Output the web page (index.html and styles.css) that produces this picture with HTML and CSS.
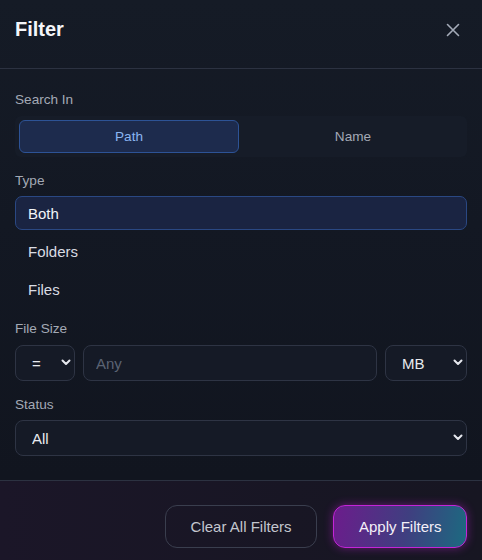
FILE: index.html
```html
<!DOCTYPE html>
<html lang="en">
<head>
<meta charset="utf-8">
<title>Filter</title>
<link rel="stylesheet" href="styles.css">
</head>
<body>
<div class="panel">
  <header class="head">
    <h1 class="title">Filter</h1>
    <button class="close" aria-label="Close">
      <svg width="14" height="14" viewBox="0 0 14 14"><path d="M1.5 1.5 L12.5 12.5 M12.5 1.5 L1.5 12.5" stroke="#a4abb8" stroke-width="1.6" stroke-linecap="round" fill="none"/></svg>
    </button>
  </header>
  <main class="body">
    <section class="field">
      <div class="label">Search In</div>
      <div class="seg">
        <button class="seg-btn active">Path</button>
        <button class="seg-btn">Name</button>
      </div>
    </section>
    <section class="field type">
      <div class="label">Type</div>
      <div class="options">
        <div class="opt selected">Both</div>
        <div class="opt">Folders</div>
        <div class="opt">Files</div>
      </div>
    </section>
    <section class="field">
      <div class="label">File Size</div>
      <div class="size-row">
        <div class="sel-wrap op">
          <select class="sel"><option>=</option></select>
          <svg class="chev" width="10" height="7" viewBox="0 0 10 7"><path d="M1.5 1.5 L5 5 L8.5 1.5" stroke="#e6e8ee" stroke-width="2" fill="none" stroke-linecap="round" stroke-linejoin="round"/></svg>
        </div>
        <input class="inp" type="text" placeholder="Any">
        <div class="sel-wrap unit">
          <select class="sel"><option>MB</option></select>
          <svg class="chev" width="10" height="7" viewBox="0 0 10 7"><path d="M1.5 1.5 L5 5 L8.5 1.5" stroke="#e6e8ee" stroke-width="2" fill="none" stroke-linecap="round" stroke-linejoin="round"/></svg>
        </div>
      </div>
    </section>
    <section class="field">
      <div class="label">Status</div>
      <div class="sel-wrap full">
        <select class="sel"><option>All</option></select>
        <svg class="chev" width="10" height="7" viewBox="0 0 10 7"><path d="M1.5 1.5 L5 5 L8.5 1.5" stroke="#e6e8ee" stroke-width="2" fill="none" stroke-linecap="round" stroke-linejoin="round"/></svg>
      </div>
    </section>
  </main>
  <footer class="foot">
    <button class="btn ghost">Clear All Filters</button>
    <button class="btn primary">Apply Filters</button>
  </footer>
</div>
</body>
</html>
```
FILE: styles.css
```css
* { box-sizing: border-box; }
html, body { margin: 0; padding: 0; }
body {
  width: 482px;
  height: 560px;
  background: #121722;
  font-family: "Liberation Sans", Arial, sans-serif;
  color: #e6e8ee;
  overflow: hidden;
}
.panel {
  display: flex;
  flex-direction: column;
  height: 560px;
  background: linear-gradient(180deg, #151b26 0%, #131823 40%, #11151f 85%);
}
.head {
  height: 69px;
  display: flex;
  align-items: flex-start;
  justify-content: space-between;
  padding: 17px 15px 0 15px;
  border-bottom: 1px solid #2c3241;
}
.title {
  margin: 0;
  font-size: 20px;
  line-height: 24px;
  font-weight: 700;
  color: #f4f6fa;
}
.close {
  width: 24px;
  height: 24px;
  margin: 1px 2px 0 0;
  padding: 0;
  border: 0;
  background: transparent;
  display: flex;
  align-items: center;
  justify-content: center;
}
.body {
  display: flex;
  flex-direction: column;
  gap: 16px;
  padding: 23px 15px 24px 15px;
  border-bottom: 1px solid #2c3241;
}
.label {
  font-size: 13.6px;
  line-height: 16px;
  color: #a3a9b5;
  margin-bottom: 8px;
}
.seg {
  display: flex;
  gap: 4px;
  padding: 4px;
  background: #161c28;
  border-radius: 6px;
}
.seg-btn {
  flex: 1;
  height: 33px;
  border: 1px solid transparent;
  border-radius: 6px;
  background: transparent;
  font-family: inherit;
  font-size: 13.6px;
  color: #a3a9b5;
}
.seg-btn.active {
  background: #1d2b4d;
  border-color: #2d5396;
  color: #8ab6f2;
}
.field.type { margin-bottom: -1px; }
.options {
  display: flex;
  flex-direction: column;
  gap: 4px;
  margin-top: -1px;
}
.opt {
  height: 34px;
  display: flex;
  align-items: center;
  padding: 0 12px;
  border: 1px solid transparent;
  border-radius: 7px;
  font-size: 15px;
  color: #d9dce3;
}
.opt.selected {
  background: #1a2442;
  border-color: #2a4883;
  color: #f2f4f8;
}
.size-row {
  display: flex;
  gap: 8px;
}
.sel-wrap {
  position: relative;
  height: 36px;
}
.sel-wrap.op { width: 60px; }
.sel-wrap.unit { width: 82px; }
.sel-wrap.full { width: 100%; margin-top: -1px; }
.sel {
  appearance: none;
  -webkit-appearance: none;
  width: 100%;
  height: 100%;
  background: #151a26;
  border: 1px solid #2e3444;
  border-radius: 8px;
  padding: 0 0 0 16px;
  font-family: inherit;
  font-size: 15px;
  color: #e8eaef;
}
.chev {
  position: absolute;
  right: 4px;
  top: 14px;
  pointer-events: none;
}
.inp {
  flex: 1;
  height: 36px;
  background: #151a26;
  border: 1px solid #2e3444;
  border-radius: 8px;
  padding: 0 12px;
  font-family: inherit;
  font-size: 15px;
  color: #e8eaef;
}
.inp::placeholder { color: #5b6373; }
.foot {
  flex: 1;
  display: flex;
  justify-content: flex-end;
  align-items: flex-start;
  gap: 16px;
  padding: 24px 15px 0 15px;
  background: linear-gradient(90deg, #1b1628 0%, #181624 60%, #171622 100%);
}
.btn {
  height: 43px;
  border-radius: 12px;
  font-family: inherit;
  font-size: 15px;
  padding: 0 25px;
}
.ghost {
  background: transparent;
  border: 1px solid #3a3e4e;
  color: #c3c6ce;
}
.primary {
  background: linear-gradient(100deg, #6c1c8c 0%, #3f3f80 55%, #1c6a80 100%);
  border: 1px solid #c424d8;
  color: #f4f0f8;
  padding: 0 24.5px;
  box-shadow: 0 0 10px rgba(196, 36, 216, 0.45);
}
```
